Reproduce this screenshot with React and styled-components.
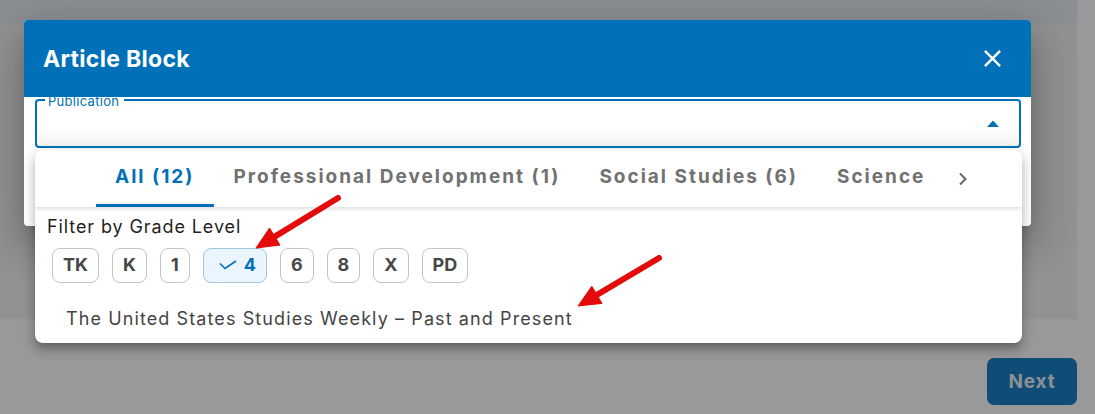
import styled, { createGlobalStyle } from "styled-components";

const GlobalStyle = createGlobalStyle`
  html, body {
    margin: 0;
    padding: 0;
  }
  body {
    background: #999999;
    font-family: Inter, "Noto Sans", sans-serif;
    overflow: hidden;
  }
`

const Page = styled.div`
  position: relative;
  width: 1095px;
  height: 414px;
  overflow: hidden;
`

const TopBand = styled.div`
  width: 1077px;
  height: 24px;
  background: #8b8e92;
`

const Card = styled.div`
  width: 1077px;
  height: 295px;
  background: #929292;
`

const Footer = styled.div`
  display: flex;
  justify-content: flex-end;
  padding: 39px 18px 0 0;
`

const NextButton = styled.button`
  width: 90px;
  height: 47px;
  border: none;
  border-radius: 7px;
  background: #0f4d77;
  color: #8d9194;
  font-family: inherit;
  font-size: 19px;
  font-weight: 700;
  letter-spacing: 0.8px;
`

const Modal = styled.div`
  position: absolute;
  left: 24px;
  top: 20px;
  width: 1007px;
  height: 206px;
  display: flex;
  flex-direction: column;
  background: #fff;
  border-radius: 4px;
  overflow: hidden;
  box-shadow: 0 11px 15px -7px rgba(0, 0, 0, 0.2), 0 24px 38px 3px rgba(0, 0, 0, 0.14), 0 9px 46px 8px rgba(0, 0, 0, 0.12);
`

const ModalHeader = styled.div`
  height: 77px;
  flex: none;
  display: flex;
  align-items: center;
  justify-content: space-between;
  padding: 0 24px 0 19px;
  background: #0070b8;
`

const Title = styled.h2`
  margin: 0;
  color: #fff;
  font-size: 23px;
  font-weight: 700;
  letter-spacing: 0.3px;
`

const CloseButton = styled.span`
  display: flex;
  width: 29px;
  height: 29px;
  color: #fff;
`

const ModalBody = styled.div`
  flex: 1;
  overflow: hidden;
  padding: 2px 10px 0 11px;
`

const Field = styled.div`
  position: relative;
  box-sizing: border-box;
  height: 49px;
  display: flex;
  align-items: center;
  justify-content: flex-end;
  padding-right: 20px;
  border: 2px solid #0070b8;
  border-radius: 4px;
  background: linear-gradient(#fff 55%, #f5f5f5);
`

const FieldLabel = styled.span`
  position: absolute;
  left: 8px;
  top: -8px;
  padding: 0 5px 0 3px;
  background: #fff;
  color: #0070b8;
  font-size: 13px;
  line-height: 16px;
  letter-spacing: 0.3px;
`

const Popover = styled.div`
  position: absolute;
  left: 35px;
  top: 150px;
  width: 987px;
  height: 193px;
  background: #fff;
  border-radius: 8px;
  overflow: hidden;
  box-shadow: 0 5px 5px -3px rgba(0, 0, 0, 0.2), 0 8px 10px 1px rgba(0, 0, 0, 0.14), 0 3px 14px 2px rgba(0, 0, 0, 0.12);
`

const TabBar = styled.div`
  position: relative;
  height: 57px;
  display: flex;
  padding: 0 39px 0 61px;
  box-shadow: 0 2px 4px rgba(0, 0, 0, 0.13);
`

const TabList = styled.div`
  flex: 1;
  display: flex;
  overflow: hidden;
`

const Tab = styled.div`
  position: relative;
  flex: none;
  display: flex;
  align-items: center;
  padding: 0 20px 4px 19px;
  color: ${({ active }) => (active ? "#0070b8" : "#717171")};
  font-size: 19px;
  font-weight: 700;
  letter-spacing: 2px;
  white-space: nowrap;

  &::after {
    content: "";
    position: absolute;
    left: 0;
    right: 0;
    bottom: 0;
    height: 3px;
    background: ${({ active }) => (active ? "#0070b8" : "transparent")};
  }
`

const ScrollButton = styled.div`
  width: 40px;
  display: flex;
  align-items: center;
  justify-content: center;
  color: #666;
`

const FilterLabel = styled.div`
  margin: 8px 0 0 12px;
  color: #1f1f1f;
  font-size: 18px;
  line-height: 24px;
  letter-spacing: 0.9px;
`

const ChipRow = styled.div`
  display: flex;
  gap: 13px;
  margin-top: 9px;
  padding-left: 17px;
`

const Chip = styled.div`
  box-sizing: border-box;
  height: 35px;
  display: flex;
  align-items: center;
  gap: 7px;
  padding: 0 10px 2px ${({ selected }) => (selected ? "15px" : "10px")};
  border: 1px solid ${({ selected }) => (selected ? "#a3c5de" : "#c4c4c4")};
  border-radius: 8px;
  background: ${({ selected }) => (selected ? "#ebf5fd" : "#fff")};
  color: ${({ selected }) => (selected ? "#0070b8" : "#474747")};
  font-size: 18px;
  font-weight: 700;
`

const Item = styled.div`
  margin-top: 24px;
  padding-left: 31px;
  color: #444;
  font-size: 18px;
  line-height: 24px;
  letter-spacing: 1.1px;
`

const Overlay = styled.svg`
  position: absolute;
  left: 0;
  top: 0;
  pointer-events: none;
`

function RedArrow({ from, to }) {
  const dx = to[0] - from[0]
  const dy = to[1] - from[1]
  const len = Math.hypot(dx, dy)
  const ux = dx / len
  const uy = dy / len
  const bx = to[0] - ux * 22
  const by = to[1] - uy * 22
  const nx = -uy * 10
  const ny = ux * 10
  return (
    <g fill="#e30b0b" stroke="#e30b0b">
      <line x1={from[0]} y1={from[1]} x2={bx + ux * 2} y2={by + uy * 2} strokeWidth="6" strokeLinecap="round" />
      <polygon points={`${to[0]},${to[1]} ${bx + nx},${by + ny} ${bx - nx},${by - ny}`} strokeWidth="1" strokeLinejoin="round" />
    </g>
  )
}

const grades = ["TK", "K", "1", "4", "6", "8", "X", "PD"]
const tabs = ["All (12)", "Professional Development (1)", "Social Studies (6)", "Science"]

export default function App() {
  return (
    <Page>
      <GlobalStyle />
      <TopBand />
      <Card />
      <Footer>
        <NextButton>Next</NextButton>
      </Footer>

      <Modal>
        <ModalHeader>
          <Title>Article Block</Title>
          <CloseButton>
            <svg viewBox="0 0 24 24" width="29" height="29" fill="currentColor">
              <path d="M19 6.41 17.59 5 12 10.59 6.41 5 5 6.41 10.59 12 5 17.59 6.41 19 12 13.41 17.59 19 19 17.59 13.41 12z" />
            </svg>
          </CloseButton>
        </ModalHeader>
        <ModalBody>
          <Field>
            <FieldLabel>Publication</FieldLabel>
            <svg width="12" height="7" viewBox="0 0 12 7">
              <polygon points="0,7 6,0.5 12,7" fill="#0070b8" />
            </svg>
          </Field>
        </ModalBody>
      </Modal>

      <Popover>
        <TabBar>
          <TabList>
            {tabs.map((t, i) => (
              <Tab key={t} active={i === 0}>{t}</Tab>
            ))}
          </TabList>
          <ScrollButton>
            <svg width="10" height="14" viewBox="0 0 10 14">
              <polyline points="2,1.5 7.5,7 2,12.5" fill="none" stroke="currentColor" strokeWidth="2" />
            </svg>
          </ScrollButton>
        </TabBar>
        <FilterLabel>Filter by Grade Level</FilterLabel>
        <ChipRow>
          {grades.map(g => (
            <Chip key={g} selected={g === "4"}>
              {g === "4" && (
                <svg width="18" height="10" viewBox="0 0 18 10">
                  <polyline points="1,3.5 6,8.5 17,1" fill="none" stroke="currentColor" strokeWidth="1.6" />
                </svg>
              )}
              {g}
            </Chip>
          ))}
        </ChipRow>
        <Item>The United States Studies Weekly – Past and Present</Item>
      </Popover>

      <Overlay width="1095" height="414">
        <RedArrow from={[338, 198]} to={[256, 248]} />
        <RedArrow from={[659, 258]} to={[578, 306]} />
      </Overlay>
    </Page>
  )
}
